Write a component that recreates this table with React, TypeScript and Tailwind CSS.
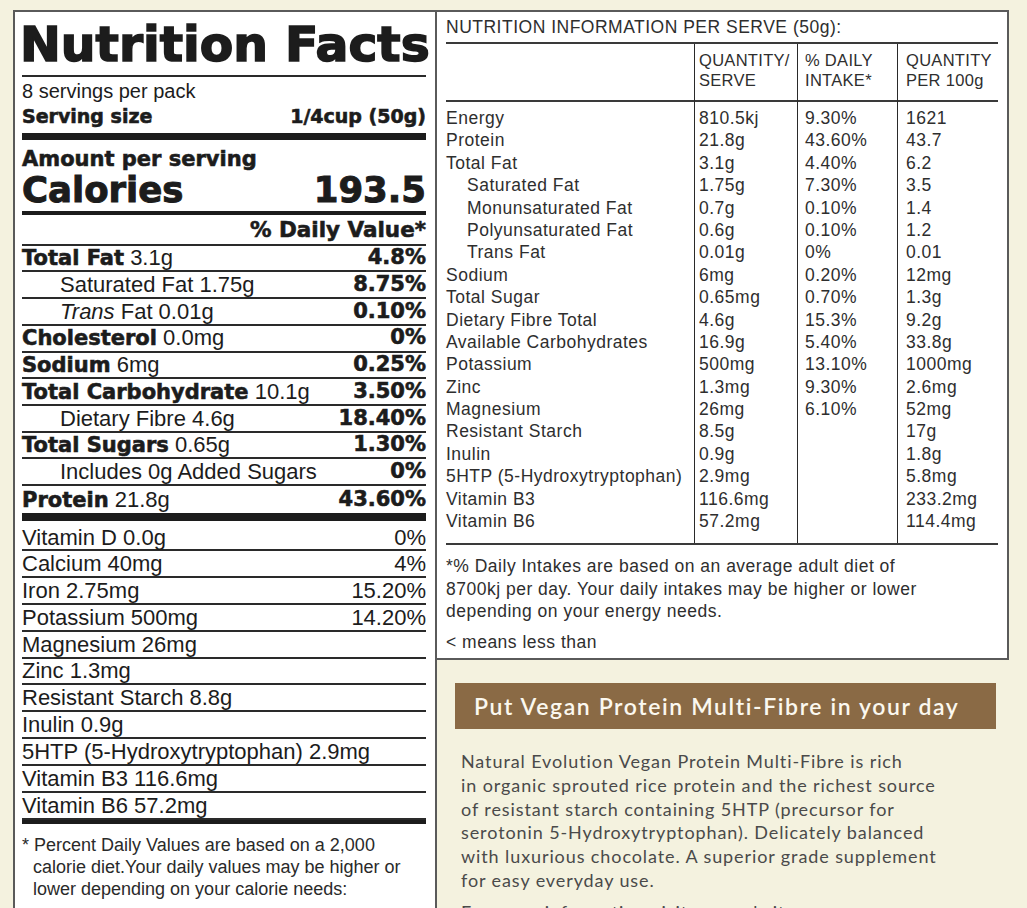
const regular = "font-['Liberation_Sans',Arial,sans-serif]";
const heavy = "font-['DejaVu_Sans',sans-serif] font-bold [-webkit-text-stroke:0.6px_#1c1c1c]";

type LabelRow = { bold?: string; italic?: string; rest: string; dv: string; indent?: boolean };

const mainRows: LabelRow[] = [
  { bold: 'Total Fat', rest: ' 3.1g', dv: '4.8%' },
  { rest: 'Saturated Fat 1.75g', dv: '8.75%', indent: true },
  { italic: 'Trans', rest: ' Fat 0.01g', dv: '0.10%', indent: true },
  { bold: 'Cholesterol', rest: ' 0.0mg', dv: '0%' },
  { bold: 'Sodium', rest: ' 6mg', dv: '0.25%' },
  { bold: 'Total Carbohydrate', rest: ' 10.1g', dv: '3.50%' },
  { rest: 'Dietary Fibre 4.6g', dv: '18.40%', indent: true },
  { bold: 'Total Sugars', rest: ' 0.65g', dv: '1.30%' },
  { rest: 'Includes 0g Added Sugars', dv: '0%', indent: true },
];

const extraRows: [string, string][] = [
  ['Vitamin D 0.0g', '0%'],
  ['Calcium 40mg', '4%'],
  ['Iron 2.75mg', '15.20%'],
  ['Potassium 500mg', '14.20%'],
  ['Magnesium 26mg', ''],
  ['Zinc 1.3mg', ''],
  ['Resistant Starch 8.8g', ''],
  ['Inulin 0.9g', ''],
  ['5HTP (5-Hydroxytryptophan) 2.9mg', ''],
  ['Vitamin B3 116.6mg', ''],
  ['Vitamin B6 57.2mg', ''],
];

// name, per serve, % daily intake, per 100g, indented
const tableRows: [string, string, string, string, boolean?][] = [
  ['Energy', '810.5kj', '9.30%', '1621'],
  ['Protein', '21.8g', '43.60%', '43.7'],
  ['Total Fat', '3.1g', '4.40%', '6.2'],
  ['Saturated Fat', '1.75g', '7.30%', '3.5', true],
  ['Monunsaturated Fat', '0.7g', '0.10%', '1.4', true],
  ['Polyunsaturated Fat', '0.6g', '0.10%', '1.2', true],
  ['Trans Fat', '0.01g', '0%', '0.01', true],
  ['Sodium', '6mg', '0.20%', '12mg'],
  ['Total Sugar', '0.65mg', '0.70%', '1.3g'],
  ['Dietary Fibre Total', '4.6g', '15.3%', '9.2g'],
  ['Available Carbohydrates', '16.9g', '5.40%', '33.8g'],
  ['Potassium', '500mg', '13.10%', '1000mg'],
  ['Zinc', '1.3mg', '9.30%', '2.6mg'],
  ['Magnesium', '26mg', '6.10%', '52mg'],
  ['Resistant Starch', '8.5g', '', '17g'],
  ['Inulin', '0.9g', '', '1.8g'],
  ['5HTP (5-Hydroxytryptophan)', '2.9mg', '', '5.8mg'],
  ['Vitamin B3', '116.6mg', '', '233.2mg'],
  ['Vitamin B6', '57.2mg', '', '114.4mg'],
];

function NutritionLabel() {
  return (
    <div className={`w-[424px] shrink-0 border-2 border-[#5a5a5a] bg-white pl-[7px] pr-[9px] pb-[30px] text-[#1c1c1c] ${regular}`}>
      <div className="h-[65px] border-b-2 border-[#2a2a2a] pt-[3px]">
        <h1 className={`${heavy} -ml-[2px] text-[48.8px] leading-[60px] whitespace-nowrap [-webkit-text-stroke:1.6px_#1c1c1c]`}>Nutrition Facts</h1>
      </div>
      <p className="h-[29px] text-[20px] leading-[29px]">8 servings per pack</p>
      <div className={`flex h-[21px] items-center justify-between text-[19px] ${heavy}`}>
        <span>Serving size</span>
        <span>1/4cup (50g)</span>
      </div>
      <div className="mt-[6px] h-[7px] bg-[#1c1c1c]" />
      <p className={`mt-[6px] h-[26px] text-[21px] leading-[26px] ${heavy}`}>Amount per serving</p>
      <div className={`flex h-[36px] items-center justify-between text-[35.5px] leading-[36px] ${heavy} [-webkit-text-stroke:1px_#1c1c1c]`}>
        <span>Calories</span>
        <span>193.5</span>
      </div>
      <div className="mt-[3px] h-[4px] bg-[#1c1c1c]" />
      <div className={`flex h-[30.8px] items-center justify-end border-b-2 border-[#2a2a2a] pt-[2px] text-[21.5px] ${heavy}`}>
        % Daily Value*
      </div>
      {mainRows.map((row, i) => (
        <div key={i} className="flex h-[26.7px] items-center justify-between border-b-2 border-[#2a2a2a] text-[22px]">
          <span className={row.indent ? 'pl-[38px]' : ''}>
            {row.bold && <span className={`${heavy} text-[21px]`}>{row.bold}</span>}
            {row.italic && <span className="italic">{row.italic}</span>}
            {row.rest}
          </span>
          <span className={`${heavy} text-[21px]`}>{row.dv}</span>
        </div>
      ))}
      <div className="flex h-[26.7px] items-center justify-between text-[22px]">
        <span>
          <span className={`${heavy} text-[21px]`}>Protein</span> 21.8g
        </span>
        <span className={`${heavy} text-[21px]`}>43.60%</span>
      </div>
      <div className="h-[8px] bg-[#1c1c1c]" />
      {extraRows.map(([name, dv], i) => (
        <div
          key={name}
          className={`flex items-center justify-between border-b-2 border-[#2a2a2a] text-[22px] last:border-b-0 ${i === 0 ? 'h-[30.5px] pt-[5px]' : 'h-[26.85px]'}`}
        >
          <span className="whitespace-nowrap">{name}</span>
          <span>{dv}</span>
        </div>
      ))}
      <div className="h-[4px] bg-[#1c1c1c]" />
      <p className="pt-[10px] pl-[11px] -indent-[11px] text-[18px] leading-[22px] text-[#2a2a2a]">
        * Percent Daily Values are based on a 2,000 calorie diet.Your daily values may be higher or lower depending on your calorie needs:
      </p>
    </div>
  );
}

function InfoPanel() {
  const cols = [
    { head: ['', ''], cls: 'w-[248px]', pad: '' },
    { head: ['QUANTITY/', 'SERVE'], cls: 'w-[103px] border-l border-[#2a2a2a]', pad: 'pl-[4px]' },
    { head: ['% DAILY', 'INTAKE*'], cls: 'w-[100px] border-l border-[#2a2a2a]', pad: 'pl-[7px]' },
    { head: ['QUANTITY', 'PER 100g'], cls: 'flex-1 border-l border-[#2a2a2a]', pad: 'pl-[8px]' },
  ];
  return (
    <div className={`h-[650px] border-y-2 border-r-2 border-[#5a5a5a] bg-white px-[9px] text-[17.5px] tracking-[0.5px] text-[#2e2e2e] ${regular}`}>
      <p className="h-[30px] leading-[30px]">NUTRITION INFORMATION PER SERVE (50g):</p>
      <div className="flex border-y-2 border-[#3a3a3a]">
        {cols.map((col, c) => (
          <div key={c} className={col.cls}>
            <div className={`h-[58px] border-b-2 border-[#3a3a3a] pt-[6px] text-[16.5px] leading-[20px] tracking-[0.3px] ${col.pad}`}>
              <div>{col.head[0]}</div>
              <div>{col.head[1]}</div>
            </div>
            <div className={`h-[441px] pt-[5px] ${col.pad}`}>
              {tableRows.map((r) => (
                <div
                  key={r[0]}
                  className={`h-[22.4px] whitespace-nowrap leading-[22.4px] ${c === 0 && r[4] ? 'pl-[21px]' : ''}`}
                >
                  {r[c]}
                </div>
              ))}
            </div>
          </div>
        ))}
      </div>
      <p className="pt-[10px] leading-[22.5px]">
        *% Daily Intakes are based on an average adult diet of
        <br />
        8700kj per day. Your daily intakes may be higher or lower
        <br />
        depending on your energy needs.
      </p>
      <p className="mt-[8px] leading-[22px]">&lt; means less than</p>
    </div>
  );
}

function Promo() {
  return (
    <div className="font-['Lato',sans-serif]">
      <div className="mt-[23px] ml-[18px] mr-[13px] flex h-[46px] items-center bg-[#8a6a45] pl-[19px] text-[23px] font-semibold tracking-[1.6px] text-[#fbf8ef]">
        Put Vegan Protein Multi-Fibre in your day
      </div>
      <div className="mt-[21px] pl-[24px] text-[18px] leading-[23.8px] tracking-[0.9px] text-[#4a4a4a]">
        <p>
          Natural Evolution Vegan Protein Multi-Fibre is rich
          <br />
          in organic sprouted rice protein and the richest source
          <br />
          of resistant starch containing 5HTP (precursor for
          <br />
          serotonin 5-Hydroxytryptophan). Delicately balanced
          <br />
          with luxurious chocolate. A superior grade supplement
          <br />
          for easy everyday use.
        </p>
        <p className="mt-[8px]">For more information visit our website.</p>
      </div>
    </div>
  );
}

export default function App() {
  return (
    <div className="flex min-h-screen items-start bg-[#f4f2df] pt-[10px] pr-[18px] pl-[13px]">
      <NutritionLabel />
      <div className="flex min-w-0 flex-1 flex-col">
        <InfoPanel />
        <Promo />
      </div>
    </div>
  );
}
